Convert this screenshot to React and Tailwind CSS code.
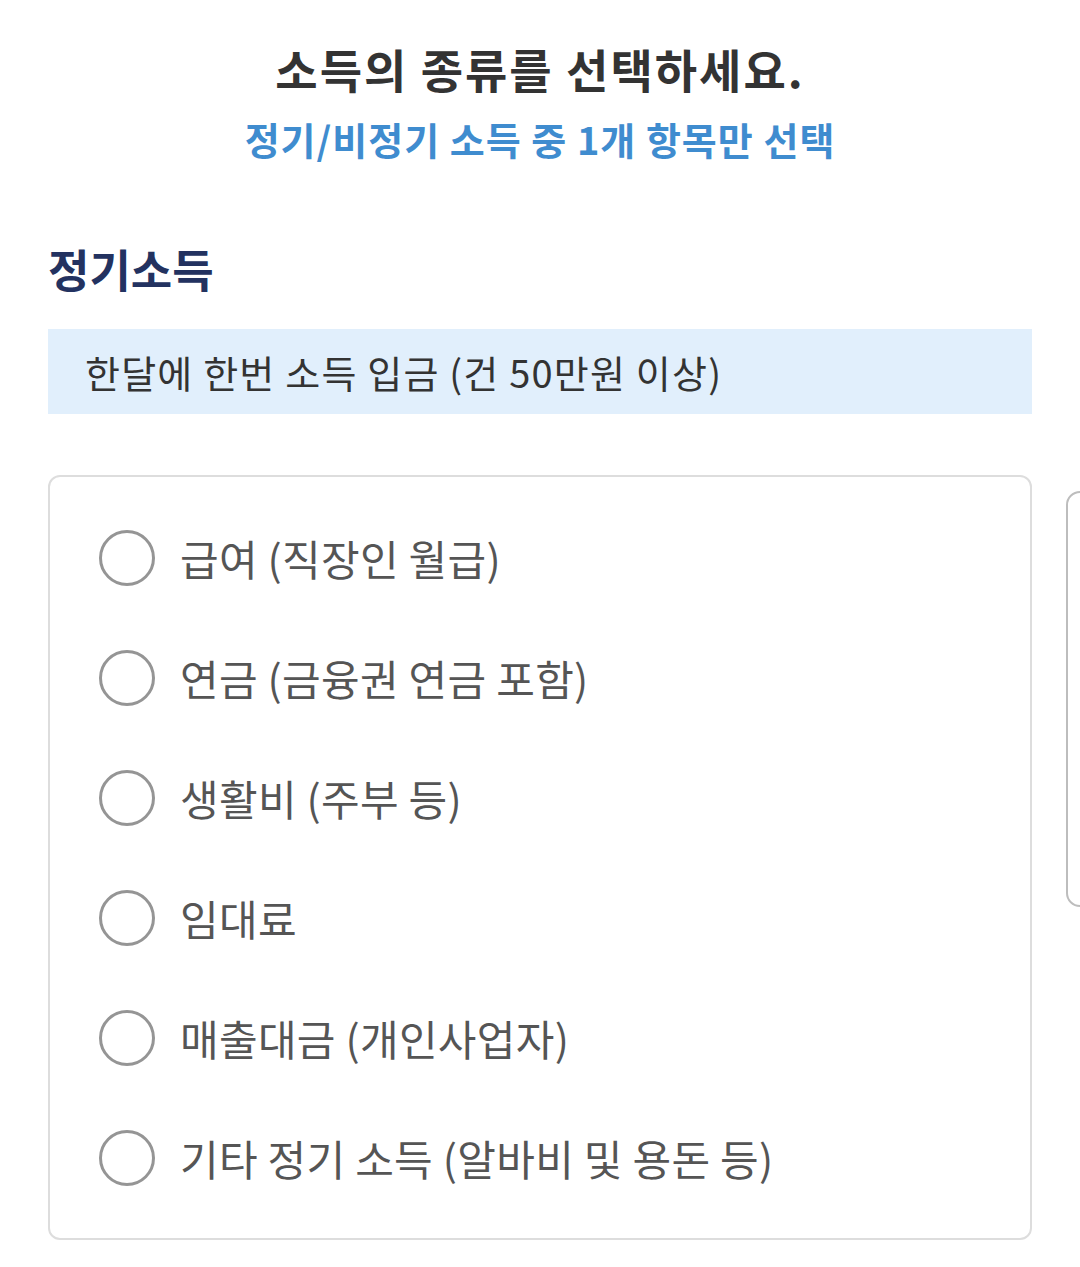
const options = [
  '급여 (직장인 월급)',
  '연금 (금융권 연금 포함)',
  '생활비 (주부 등)',
  '임대료',
  '매출대금 (개인사업자)',
  '기타 정기 소득 (알바비 및 용돈 등)',
]

function RadioRow({ label }) {
  return (
    <label className="flex h-[120px] items-center gap-[25px] pl-[49px]">
      <span className="block h-[56px] w-[56px] shrink-0 rounded-full border-[3px] border-[#959595] bg-white" />
      <span className="text-[42px] leading-none tracking-[0.3px] text-[#555555]">{label}</span>
    </label>
  )
}

export default function App() {
  return (
    <div
      className="h-[1267px] w-[1080px] overflow-hidden bg-white"
      style={{ fontFamily: '"Noto Sans CJK KR", "Noto Sans", sans-serif' }}
    >
      {/* Header */}
      <div className="pt-[40px] text-center">
        <h1 className="text-[46px] font-bold leading-[56px] tracking-[2px] text-[#333333]">
          소득의 종류를 선택하세요.
        </h1>
        <p className="mt-[15px] text-[38px] font-bold leading-[56px] tracking-[1px] text-[#3f8ccf]">
          정기/비정기 소득 중 1개 항목만 선택
        </p>
      </div>

      {/* Section */}
      <div className="px-[48px]">
        <h2 className="mt-[74px] text-[45px] font-bold leading-[56px] text-[#233260]">
          정기소득
        </h2>
        <div className="mt-[32px] flex h-[85px] items-center bg-[#e1effc] pl-[37px]">
          <span className="text-[38px] leading-none tracking-[1.2px] text-[#333333]">
            한달에 한번 소득 입금 (건 50만원 이상)
          </span>
        </div>
      </div>

      {/* Cards carousel */}
      <div className="mt-[61px] flex pl-[48px]">
        <div className="w-[984px] shrink-0 rounded-[12px] border-2 border-[#dddddd] pt-[21px] pb-[20px]">
          {options.map((o) => (
            <RadioRow key={o} label={o} />
          ))}
        </div>
        <div className="ml-[34px] mt-[16px] h-[416px] w-[984px] shrink-0 rounded-[14px] border-2 border-[#bdbdbd]" />
      </div>
    </div>
  )
}
